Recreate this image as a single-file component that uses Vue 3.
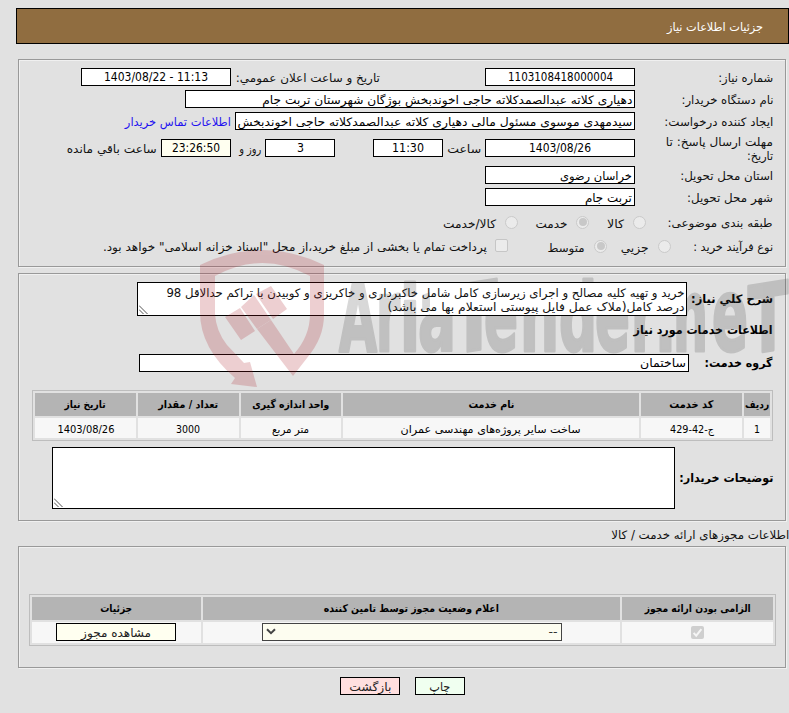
<script setup>
import { h } from 'vue'

// One-line text squeezed or stretched to a fixed measure
const Fit = (props, { slots }) =>
  h('span', { class: ['fit', { 'fit-ltr': props.ltr !== undefined }], style: { width: props.w + 'px' } }, [
    h('span', {
      class: 'fit-in',
      onVnodeMounted: (v) => {
        const natural = v.el.getBoundingClientRect().width
        if (natural) v.el.style.transform = `scaleX(${props.w / natural})`
      },
    }, slots.default()),
  ])
Fit.props = ['w', 'ltr']

// Horizontal spacer inside a form row
const Sp = (props) => h('span', { class: 'sp', style: { width: props.w + 'px' } })
Sp.props = ['w']

const serviceHead = [
  ['ردیف', 24], ['کد خدمت', 44], ['نام خدمت', 46], ['واحد اندازه گیری', 77], ['تعداد / مقدار', 60], ['تاریخ نیاز', 41],
]
const serviceRow = [
  ['1', 6], ['ج-42-429', 44], ['ساخت سایر پروژه‌های مهندسی عمران', 180], ['متر مربع', 37], ['3000', 24], ['1403/08/26', 57],
]
// letter, left edge, advance, size, vertical slant
const glyphs = [
  ['A', 339, 38, 93, 0], ['r', 376, 24, 101, 0], ['i', 400, 20, 90, 0], ['a', 418, 38, 101, 0],
  ['T', 451, 46, 93, -9], ['e', 484, 34, 101, 0], ['n', 520, 39, 101, 0], ['d', 559, 38, 94, 0],
  ['e', 595, 35, 101, 0], ['r', 631, 25, 101, 0], ['.', 655, 21, 80, 0], ['n', 673, 35, 101, 0],
  ['e', 712, 36, 101, 0], ['T', 748, 40, 93, -9],
]
</script>

<template>
  <div class="page">
    <header class="bar"><Fit :w="96">جزئیات اطلاعات نیاز</Fit></header>

    <section class="panel first">
      <div class="row">
        <div class="label"><Fit :w="55">شماره نیاز:</Fit></div>
        <div class="field w150 mid"><Fit ltr :w="105">1103108418000004</Fit></div>
        <Sp :w="105" /><Fit :w="144">تاریخ و ساعت اعلان عمومي:</Fit><Sp :w="5" />
        <div class="field w150 mid"><Fit ltr :w="104">1403/08/22 - 11:13</Fit></div>
      </div>
      <div class="row">
        <div class="label"><Fit :w="92">نام دستگاه خریدار:</Fit></div>
        <div class="field w450"><Fit :w="370">دهیاری کلاته عبدالصمدکلاته حاجی اخوندبخش بوژگان شهرستان تربت جام</Fit></div>
      </div>
      <div class="row">
        <div class="label"><Fit :w="109">ایجاد کننده درخواست:</Fit></div>
        <div class="field w400"><Fit :w="395">سیدمهدی موسوی مسئول مالی دهیاری کلاته عبدالصمدکلاته حاجی اخوندبخش</Fit></div>
        <Sp :w="4" /><a class="link"><Fit :w="106">اطلاعات تماس خریدار</Fit></a>
      </div>
      <div class="row deadline">
        <div class="label two"><Fit :w="107">مهلت ارسال پاسخ: تا</Fit><Fit :w="26">تاریخ:</Fit></div>
        <div class="field w150 mid"><Fit ltr :w="62">1403/08/26</Fit></div>
        <Sp :w="4" /><Fit :w="34">ساعت</Fit><Sp :w="4" />
        <div class="field w70 mid"><Fit ltr :w="32">11:30</Fit></div>
        <Sp :w="38" />
        <div class="field w70 mid"><Fit ltr :w="7">3</Fit></div>
        <Sp :w="4" /><Fit :w="22">روز و</Fit><Sp :w="8" />
        <div class="field w70 mid ivory"><Fit ltr :w="48">23:26:50</Fit></div>
        <Sp :w="4" /><Fit :w="90">ساعت باقي مانده</Fit>
      </div>
      <div class="row">
        <div class="label"><Fit :w="93">استان محل تحویل:</Fit></div>
        <div class="field w150"><Fit :w="72">خراسان رضوی</Fit></div>
      </div>
      <div class="row">
        <div class="label"><Fit :w="86">شهر محل تحویل:</Fit></div>
        <div class="field w150"><Fit :w="47">تربت جام</Fit></div>
      </div>
      <div class="row kinds">
        <Fit :w="105">طبقه بندی موضوعی:</Fit><Sp :w="22" />
        <i class="radio"></i><Sp :w="9" /><Fit class="low" :w="17">کالا</Fit><Sp :w="18" />
        <i class="radio on"></i><Sp :w="8" /><Fit class="low" :w="32">خدمت</Fit><Sp :w="18" />
        <i class="radio"></i><Sp :w="9" /><Fit class="low" :w="53">کالا/خدمت</Fit>
      </div>
      <div class="row process">
        <Fit :w="80">نوع فرآیند خرید :</Fit><Sp :w="22" />
        <i class="radio"></i><Sp :w="9" /><Fit class="low" :w="28">جزیي</Fit><Sp :w="14" />
        <i class="radio on"></i><Sp :w="9" /><Fit class="low" :w="37">متوسط</Fit><Sp :w="40" />
        <i class="check"></i><Sp :w="8" />
        <Fit :w="384">پرداخت تمام یا بخشی از مبلغ خرید،از محل "اسناد خزانه اسلامی" خواهد بود.</Fit>
      </div>
    </section>

    <section class="panel second">
      <div class="line desc">
        <b><Fit :w="82">شرح کلي نیاز:</Fit></b>
        <div class="area small">
          <Fit :w="518">خرید و تهیه کلیه مصالح و اجرای زیرسازی کامل شامل خاکبرداری و خاکریزی و کوبیدن با تراکم حدالاقل 98</Fit>
          <Fit :w="297">درصد کامل(ملاک عمل فایل پیوستی استعلام بها می باشد)</Fit>
          <svg class="grip" width="9" height="9"><path d="M0 .5L8.5 9M0 4.5L4.5 9" /></svg>
        </div>
      </div>
      <b class="heading"><Fit :w="139">اطلاعات خدمات مورد نیاز</Fit></b>
      <div class="line group">
        <b><Fit :w="68">گروه خدمت:</Fit></b>
        <div class="field w550"><Fit :w="46">ساختمان</Fit></div>
      </div>
      <div class="table services">
        <div v-for="c in serviceHead" :key="c[0]" class="th"><Fit :w="c[1]">{{ c[0] }}</Fit></div>
        <div v-for="c in serviceRow" :key="c[0]" class="td"><Fit :w="c[1]">{{ c[0] }}</Fit></div>
      </div>
      <div class="line notes">
        <b><Fit :w="94">توضیحات خریدار:</Fit></b>
        <div class="area large">
          <svg class="grip" width="9" height="9"><path d="M0 .5L8.5 9M0 4.5L4.5 9" /></svg>
        </div>
      </div>
    </section>

    <div class="caption"><Fit :w="178">اطلاعات مجوزهای ارائه خدمت / کالا</Fit></div>

    <section class="panel third">
      <div class="table permits">
        <div class="th"><Fit :w="106">الزامی بودن ارائه مجوز</Fit></div>
        <div class="th"><Fit :w="175">اعلام وضعیت مجوز توسط تامین کننده</Fit></div>
        <div class="th"><Fit :w="32">جزئیات</Fit></div>
        <div class="td">
          <i class="check filled"><svg width="13" height="13"><path d="M2.6 6.9l2.6 2.8L10.4 3.2" /></svg></i>
        </div>
        <div class="td pick">
          <div class="select">
            <Fit :w="9">--</Fit>
            <svg width="10" height="7"><path d="M1 1.2l4 3.9 4-3.9" /></svg>
          </div>
        </div>
        <div class="td open"><div class="btn view"><Fit :w="70">مشاهده مجوز</Fit></div></div>
      </div>
    </section>

    <footer class="actions">
      <div class="btn print"><Fit :w="21">چاپ</Fit></div>
      <div class="btn back"><Fit :w="42">بازگشت</Fit></div>
    </footer>

    <svg class="mark" width="789" height="713" viewBox="0 0 789 713">
      <defs>
        <clipPath id="around"><path clip-rule="evenodd" d="M0 0H789V713H0ZM430 282H687V316H430ZM430 354H689V372H430Z" /></clipPath>
      </defs>
      <g class="shield">
        <path d="M200 265Q262 235 324 265V312Q325 337 307 358L293 376L257 329L271 320L294 354Q310 336 310 314V276Q262 250 215 276V314Q216 331 227 345L244 363L250 362L257 387L231 384L235 378Q200 348 200 312Z" />
        <path d="M225 317L240 308L255 331L241 340ZM241 307L254 295L271 320L257 329ZM256 294L271 286L287 309L273 319Z" />
      </g>
      <g class="word" clip-path="url(#around)">
        <g v-for="(g, i) in glyphs" :key="i" :transform="`translate(${g[1]} 351) skewY(${g[4]})`">
          <text :y="g[4] ? 3 : 0" :font-size="g[3]" :textLength="g[2]" lengthAdjust="spacingAndGlyphs">{{ g[0] }}</text>
        </g>
      </g>
    </svg>
  </div>
</template>

<style>
body { background: #e1e1e1; }
.fit { display: inline-block; flex: none; height: 16px; line-height: 16px; white-space: nowrap; direction: rtl; text-align: right; }
.fit-in { display: inline-block; flex: none; transform-origin: 100% 50%; vertical-align: top; line-height: inherit; }
.fit-ltr { direction: ltr; text-align: left; }
.fit-ltr .fit-in { transform-origin: 0 50%; }
.bar .fit-in, .first .fit:not(.fit-ltr) .fit-in { padding-top: 1px; }
.sp { display: block; flex: none; }
</style>

<style scoped>
.page { position: relative; width: 789px; height: 713px; overflow: hidden; background: #e1e1e1; direction: rtl; color: #111; font: 11.5px/16px "DejaVu Sans Condensed", "DejaVu Sans", sans-serif; font-stretch: condensed; box-sizing: border-box; padding-top: 8px; }
.page * { box-sizing: border-box; }
.bar { height: 36px; margin-left: 16px; border: 1px solid #000; background: #906d40; color: #fff; display: flex; align-items: center; padding-right: 25px; }
.panel { width: 768px; margin-right: 3px; border: 1px solid #999; box-shadow: 1px 1px 0 #f0f0f0, inset 1px 1px 0 #f0f0f0; padding-right: 12px; }
.first { margin-top: 15px; height: 208px; padding-top: 8px; }
.row { display: flex; align-items: center; height: 18px; margin-bottom: 4px; }
.label { width: 138px; flex: none; display: flex; }
.two { flex-direction: column; }
.two > * { height: 14px; line-height: 14px; }
.deadline { height: 32px; margin: -2px 0 2px; }
.kinds { margin-top: 7px; margin-bottom: 6px; }
.field { height: 18px; border: 1px solid #000; background: #fff; flex: none; display: flex; align-items: center; padding: 0 2px; overflow: hidden; color: #000; }
.mid { justify-content: center; padding: 0; }
.ivory { background: #fffff0; }
.w70 { width: 70px; }
.w150 { width: 150px; }
.w400 { width: 400px; }
.w450 { width: 450px; }
.w550 { width: 550px; }
.link { color: #1f12f0; display: flex; }
.low { margin-top: 2px; }
.radio { width: 13px; height: 13px; border-radius: 50%; border: 1px solid #cacaca; background: #ebebeb; flex: none; display: flex; align-items: center; justify-content: center; }
.on::after { content: ""; width: 8px; height: 8px; border-radius: 50%; background: #c8c8c8; }
.check { width: 13px; height: 13px; border-radius: 2px; border: 1px solid #c6c6c6; background: #ebebeb; flex: none; }
.process .check { margin-top: -2px; }
.filled { border: 0; background: #cfcfcf; display: block; }
.filled svg { display: block; fill: none; stroke: #f5f5f5; stroke-width: 2; }
.second { margin-top: 6px; height: 248px; padding-top: 8px; }
.line { display: flex; align-items: center; }
.line b, .heading { display: flex; color: #000; }
.area { position: relative; border: 1px solid #000; background: #fff; display: flex; flex-direction: column; flex: none; }
.small { width: 550px; height: 34px; margin-right: 4px; padding: 3px 2px 0; }
.small .fit { height: 14px; line-height: 14px; }
.grip { position: absolute; left: 1px; bottom: 1px; fill: none; stroke: #555; stroke-width: 1; }
.desc { height: 34px; }
.heading { margin-top: 6px; }
.group { height: 18px; margin-top: 16px; }
.group .field { margin-right: 16px; }
.table { display: grid; gap: 2px; border: 1px solid #bdbdbd; padding: 2px; font-size: 10.5px; color: #000; }
.th { background: #b4b4b4; font-weight: bold; display: flex; align-items: center; justify-content: center; padding-bottom: 1px; }
.td { background: #f7f7f7; display: flex; align-items: center; justify-content: center; }
.services { width: 741px; height: 51px; margin-top: 18px; grid-template-columns: 26px 101px 296px 100px 101px 101px; grid-template-rows: 23px 20px; }
.services .td { padding-top: 1px; }
.notes { height: 62px; margin-top: 6px; }
.large { width: 623px; height: 62px; margin-right: 4px; }
.caption { height: 25px; display: flex; align-items: center; padding-top: 2px; }
.third { height: 122px; padding-top: 47px; padding-right: 9px; }
.permits { width: 747px; height: 52px; grid-template-columns: 151px 417px 169px; grid-template-rows: 23px 21px; }
.td.pick { justify-content: flex-start; padding-right: 58px; }
.permits .td { padding-bottom: 1px; }
.permits .td:nth-child(4) { padding-bottom: 0; padding-right: 0; }
.permits .td.open { padding-right: 1px; }
.select { width: 300px; height: 18px; margin-top: -1px; border: 1px solid #444; background: #fdfdf0; display: flex; align-items: center; justify-content: space-between; padding: 0 4px 0 3px; color: #333; font-size: 11.5px; }
.select svg { fill: none; stroke: #444; stroke-width: 2; }
.btn { height: 18px; border: 1px solid #000; display: flex; align-items: center; justify-content: center; color: #222; font-size: 11.5px; padding-top: 2px; }
.view { width: 120px; margin-top: -1px; background: #fffff0; }
.actions { display: flex; gap: 15px; padding-right: 324px; margin-top: 9px; }
.print { width: 50px; background: #f0fff0; }
.back { width: 60px; background: #ffdfdf; }
.mark { position: absolute; left: 0; top: 0; pointer-events: none; direction: ltr; }
.shield { fill: #aa141e; opacity: .2; }
.word { fill: #3c3c3c; stroke: #3c3c3c; stroke-width: 3; stroke-linejoin: round; opacity: .2; font-family: "DejaVu Sans Condensed", "DejaVu Sans", sans-serif; font-weight: bold; }
</style>
